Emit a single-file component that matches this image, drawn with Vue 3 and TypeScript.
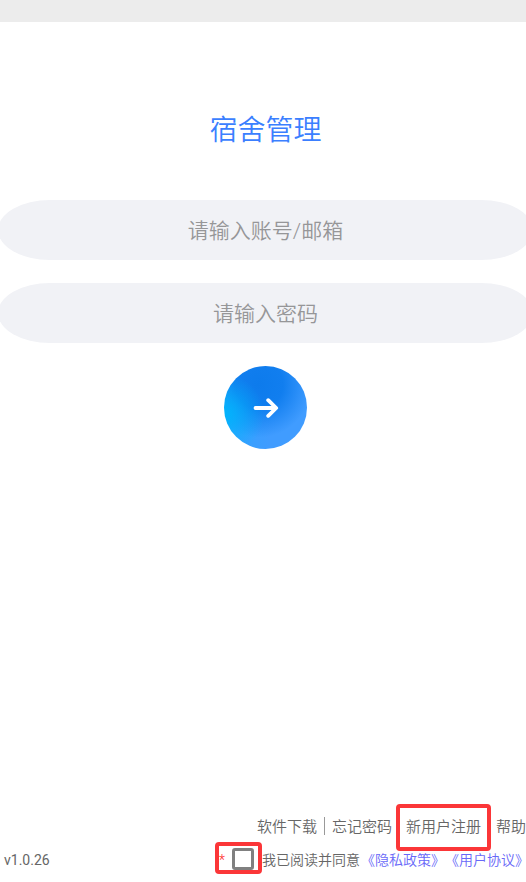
<script setup lang="ts">
import { ref } from 'vue'

const account = ref('')
const password = ref('')
const agreed = ref(false)
const version = 'v1.0.26'
</script>

<template>
  <div class="page">
    <div class="status-bar"></div>
    <main class="content">
      <h1 class="title">宿舍管理</h1>
      <form class="form" @submit.prevent>
        <input v-model="account" class="field" type="text" placeholder="请输入账号/邮箱" aria-label="请输入账号/邮箱" />
        <input v-model="password" class="field" type="password" placeholder="请输入密码" aria-label="请输入密码" />
        <button class="submit" type="submit" aria-label="登录">
          <svg class="arrow" viewBox="0 0 28 24" aria-hidden="true">
            <path d="M3.5 12H24M16.2 4.2L24.2 12L16.2 19.8" />
          </svg>
        </button>
      </form>
    </main>
    <footer class="footer">
      <nav class="links">
        <a href="#download">软件下载</a>
        <span class="divider"></span>
        <a href="#forgot">忘记密码</a>
        <a class="register" href="#register">新用户注册</a>
        <a href="#help">帮助</a>
      </nav>
      <div class="legal">
        <span class="version">{{ version }}</span>
        <div class="consent">
          <span class="mark">
            <span class="star">*</span>
            <input id="agree" v-model="agreed" class="check" type="checkbox" />
          </span>
          <label class="agree-text" for="agree">我已阅读并同意</label>
          <a href="#privacy">《隐私政策》</a>
          <a href="#terms">《用户协议》</a>
        </div>
      </div>
    </footer>
  </div>
</template>

<style>
body {
  margin: 0;
  background: #fff;
}
</style>

<style scoped>
.page {
  display: flex;
  flex-direction: column;
  min-height: 100vh;
  overflow: hidden;
  font-family: Roboto, "Noto Sans CJK SC", sans-serif;
  font-weight: 350;
  color: #666;
}

.status-bar {
  height: 22px;
  background: #ececec;
}

.content {
  flex: 1;
  padding-top: 88px;
}

.title {
  margin: 0 0 48px;
  padding-left: 5px;
  font-size: 28px;
  line-height: 42px;
  font-weight: 350;
  text-align: center;
  color: #3b7fff;
}

.form {
  display: flex;
  flex-direction: column;
  align-items: center;
  gap: 23px;
  margin: 0 -7px 0 -2px;
}

.field {
  box-sizing: border-box;
  width: 100%;
  height: 60px;
  padding: 2px 24px 0;
  border: 0;
  border-radius: 52px / 30px;
  outline: 0;
  background: #f1f2f6;
  font: inherit;
  font-size: 21px;
  text-align: center;
  color: #333;
}

.field::placeholder {
  color: #969698;
  opacity: 1;
}

.submit {
  display: flex;
  align-items: center;
  justify-content: center;
  width: 83px;
  height: 83px;
  padding: 0;
  border: 0;
  border-radius: 50%;
  background:
    radial-gradient(circle at 0 58%, #00b4fc 0, rgba(0, 180, 252, 0) 42%),
    radial-gradient(circle at 42% 22%, #0d7bec 0, #117eef 30%, rgba(17, 126, 239, 0) 66%),
    linear-gradient(100deg, #2aa5ff, #409cff 60%);
}

.arrow {
  width: 28px;
  height: 24px;
  fill: none;
  stroke: #fff;
  stroke-width: 3.8;
  stroke-linecap: round;
  stroke-linejoin: round;
}

.footer {
  padding-bottom: 8px;
}

a {
  color: inherit;
  text-decoration: none;
}

.links {
  display: flex;
  align-items: flex-start;
  justify-content: flex-end;
  font-size: 15px;
  line-height: 46px;
  white-space: nowrap;
}

.divider {
  width: 1px;
  height: 18px;
  margin: 13px 7px 0;
  background: #999;
}

.register {
  box-sizing: border-box;
  height: 47px;
  margin: 0 5px 0 4px;
  padding: 0 6px;
  border: 4px solid #fb3638;
  border-radius: 4px;
  line-height: 38px;
}

.legal {
  display: flex;
  align-items: flex-end;
  justify-content: space-between;
  margin: -9px -3px 0 4px;
  font-size: 14px;
  line-height: 28px;
  white-space: nowrap;
}

.version {
  font-weight: 400;
}

.consent {
  display: flex;
  align-items: flex-end;
}

.consent a {
  color: #6868f8;
}

.agree-text {
  margin-right: 1px;
}

.mark {
  box-sizing: border-box;
  display: flex;
  align-items: flex-end;
  justify-content: space-between;
  width: 47px;
  height: 32px;
  padding: 0 4px 0 0;
  border: 4px solid #fb3638;
  border-radius: 4px;
}

.star {
  line-height: 20px;
  color: #f22;
}

.check {
  appearance: none;
  box-sizing: border-box;
  width: 22px;
  height: 22px;
  margin: 0;
  border: 3px solid #808080;
  border-radius: 3px;
}

.check:checked {
  background: #808080;
}
</style>
